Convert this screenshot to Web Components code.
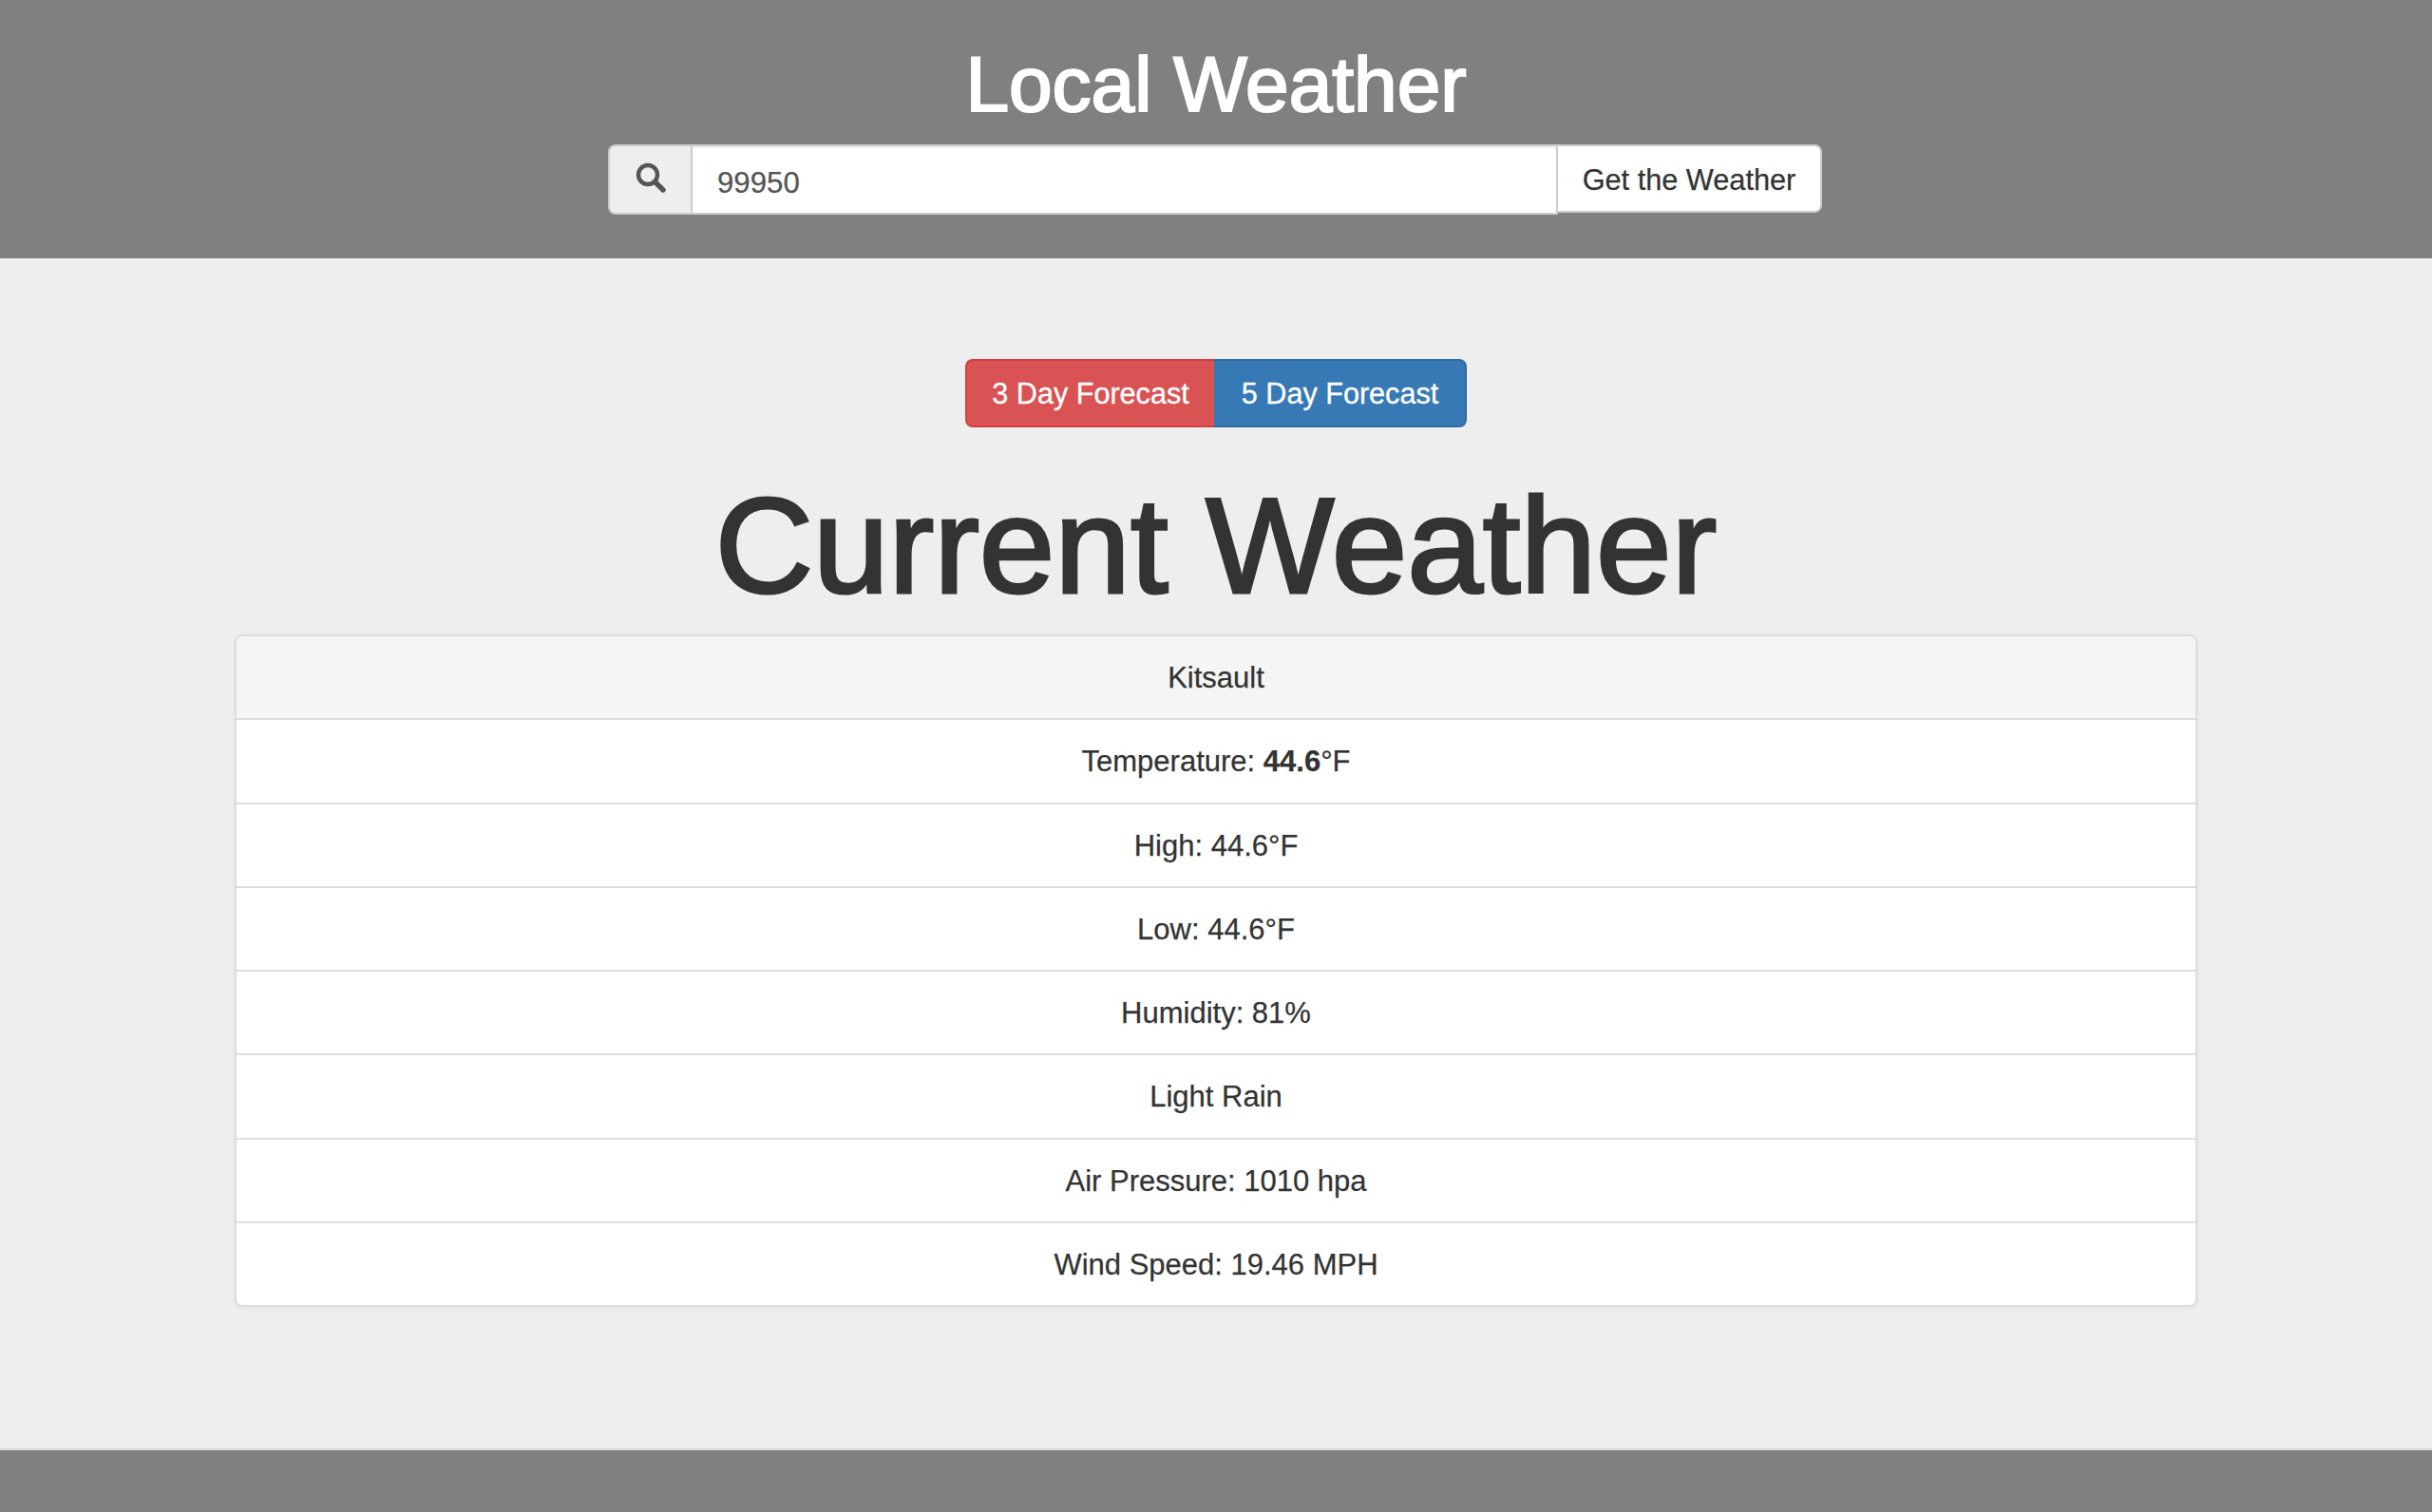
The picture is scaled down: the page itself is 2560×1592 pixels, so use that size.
<!DOCTYPE html>
<html><head><meta charset="utf-8"><title>Local Weather</title>
<style>
html,body{margin:0;padding:0}
body{width:2560px;height:1592px;background:#eee;font-family:"Liberation Sans",Arial,sans-serif;font-size:31px;color:#333;display:flex;flex-direction:column;overflow:hidden}
</style></head><body>
<weather-header>
  <span slot="title">Local Weather</span>
</weather-header>
<weather-main>
  <forecast-switch></forecast-switch>
  <page-heading>Current Weather</page-heading>
  <weather-card>
    <weather-row head>Kitsault</weather-row>
    <weather-row>Temperature: <b>44.6</b>°F</weather-row>
    <weather-row>High: 44.6°F</weather-row>
    <weather-row>Low: 44.6°F</weather-row>
    <weather-row>Humidity: 81%</weather-row>
    <weather-row>Light Rain</weather-row>
    <weather-row>Air Pressure: 1010 hpa</weather-row>
    <weather-row>Wind Speed: 19.46 MPH</weather-row>
  </weather-card>
</weather-main>
<weather-footer></weather-footer>
<script>
function def(name,html){customElements.define(name,class extends HTMLElement{constructor(){super();this.attachShadow({mode:"open"}).innerHTML=html}})}
def("weather-header",`<style>
:host{display:flex;flex-direction:column;align-items:center;height:272px;box-sizing:border-box;background:#808080;flex:none}
.t{margin:0;padding-top:43px;height:152px;box-sizing:border-box;color:#fff;font-size:82px;line-height:92px;font-weight:400;-webkit-text-stroke:2.2px #fff;white-space:nowrap}
.g{display:flex;align-items:flex-start;width:1278px;margin-right:2px}
.a{box-sizing:border-box;width:87px;height:74px;background:#eee;border:2px solid #ccc;border-right:0;border-radius:8px 0 0 8px;display:flex;align-items:center;justify-content:center}
.a svg{width:32px;height:32px;display:block;margin-top:-4px}
.i{box-sizing:border-box;flex:1;height:74px;background:#fff;border:2px solid #ccc;padding:4px 26px 0;font-size:31.2px;line-height:70px;color:#555;box-shadow:inset 0 2px 2px rgba(0,0,0,.075);-webkit-text-stroke:.25px #555}
.b{box-sizing:border-box;width:278px;height:72px;background:#fff;border:2px solid #ccc;border-left:0;border-radius:0 8px 8px 0;font-size:30.7px;line-height:71px;text-align:center;color:#333;white-space:nowrap;-webkit-text-stroke:.25px #333}
</style>
<h2 class="t"><slot name="title"></slot></h2>
<div class="g"><div class="a"><svg viewBox="0 0 32 32"><circle cx="13" cy="13" r="10" fill="none" stroke="#555" stroke-width="4.4"/><path d="M20.5 20.5L29 29" stroke="#555" stroke-width="5.4" stroke-linecap="round"/></svg></div><div class="i">99950</div><div class="b">Get the Weather</div></div>`);
def("weather-main",`<style>
:host{display:flex;flex-direction:column;align-items:center;flex:1;box-sizing:border-box;padding-top:106px}
</style><slot></slot>`);
def("page-heading",`<style>
:host{display:block;flex:none;height:218px;box-sizing:border-box;padding-top:31px;font-size:143px;line-height:187px;color:#333;-webkit-text-stroke:3.2px #333;white-space:nowrap}
</style><slot></slot>`);
def("forecast-switch",`<style>
:host{display:flex;height:72px;flex:none}
div{box-sizing:border-box;height:72px;color:#fff;font-size:30.6px;line-height:68px;text-align:center;border:2px solid;white-space:nowrap;-webkit-text-stroke:.3px #fff}
.r{width:262px;background:#d95354;border-color:#d43f3f;border-right:0;border-radius:8px 0 0 8px}
.l{width:266px;background:#3679b5;border-color:#2e6da4;border-left:0;border-radius:0 8px 8px 0;padding-left:1px}
</style><div class="r">3 Day Forecast</div><div class="l">5 Day Forecast</div>`);
def("weather-card",`<style>
:host{display:block;box-sizing:border-box;width:2066px;height:708px;background:#fff;border:2px solid #ddd;border-radius:8px;box-shadow:0 2px 4px rgba(0,0,0,.05);overflow:hidden;flex:none}
</style><slot></slot>`);
def("weather-row",`<style>
:host{display:block;box-sizing:border-box;height:88.25px;border-bottom:2px solid #ddd;font-size:31px;line-height:88px;text-align:center;color:#333;-webkit-text-stroke:.25px #333}
:host([head]){background:#f5f5f5}
:host(:last-child){border-bottom:0}
</style><slot></slot>`);
def("weather-footer",`<style>:host{display:block;height:67px;flex:none;box-sizing:border-box;background:#808080;border-top:2px solid #ddd}</style>`);
</script>
</body></html>
